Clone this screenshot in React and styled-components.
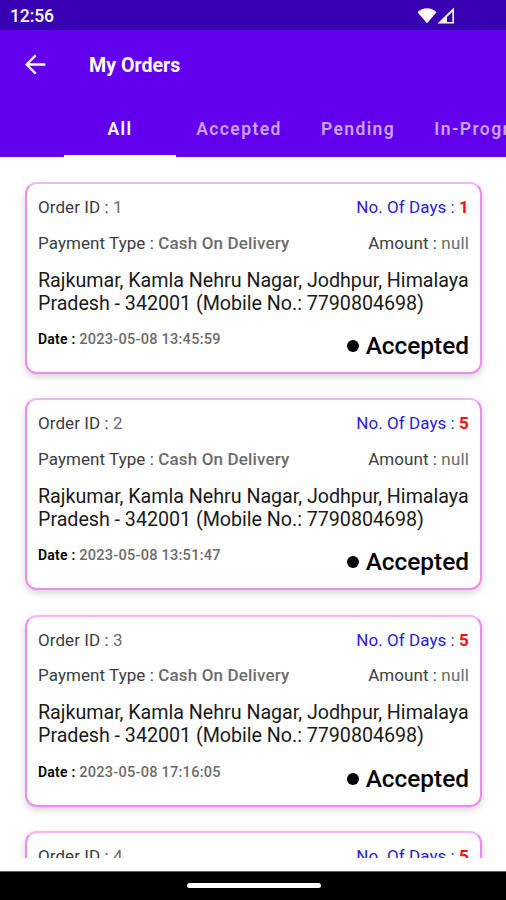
import React from "react";
import styled, { createGlobalStyle, css } from "styled-components";

const GlobalStyle = createGlobalStyle`
  * {
    box-sizing: border-box;
  }
  body {
    margin: 0;
    background: #ffffff;
    font-family: Roboto, "Liberation Sans", sans-serif;
  }
`;

const Screen = styled.div`
  width: 506px;
  height: 900px;
  display: flex;
  flex-direction: column;
  overflow: hidden;
  background: #ffffff;
`;

const StatusBar = styled.div`
  height: 30px;
  flex-shrink: 0;
  display: flex;
  align-items: center;
  justify-content: space-between;
  padding: 2px 50px 0 10px;
  background: #3700b3;
  color: #ffffff;
`;
const Clock = styled.span`
  font-size: 17.5px;
  font-weight: 500;
  line-height: 20px;
  letter-spacing: -0.1px;
`;

const Toolbar = styled.header`
  height: 69px;
  flex-shrink: 0;
  display: flex;
  align-items: center;
  gap: 43px;
  padding: 1px 0 0 24px;
  background: #6200ee;
`;
const BackButton = styled.button`
  width: 22px;
  height: 22px;
  padding: 0;
  border: 0;
  background: none;
  display: flex;
`;
const Title = styled.h1`
  margin: 0;
  padding-top: 2px;
  color: #ffffff;
  font-size: 19.6px;
  font-weight: 700;
  line-height: 24px;
`;

const TabBar = styled.nav`
  height: 58px;
  flex-shrink: 0;
  display: flex;
  padding-left: 64px;
  overflow: hidden;
  background: #6200ee;
  border-top: 1px solid #5b00e2;
`;
const Tab = styled.div`
  width: ${(props) => props.$width}px;
  flex-shrink: 0;
  display: flex;
  align-items: center;
  justify-content: center;
  padding-top: 3px;
  border-bottom: 2px solid transparent;
  color: #c9a3f9;
  font-size: 17.5px;
  font-weight: 600;
  letter-spacing: 1.4px;
  white-space: nowrap;
  ${(props) =>
    props.$active &&
    css`
      color: #ffffff;
      border-bottom-color: #ffffff;
    `}
`;

const OrderList = styled.main`
  height: 701px;
  flex-shrink: 0;
  display: flex;
  flex-direction: column;
  gap: 24.3px;
  padding: 25px 24px 0 25px;
  overflow: hidden;
`;
const Card = styled.article`
  height: 192px;
  flex-shrink: 0;
  padding: 13px 11px 0 11px;
  background: #ffffff;
  border: 2px solid #ee8af1;
  border-top-color: #f6b3f7;
  border-radius: 12px;
  box-shadow: 0 3px 7px rgba(0, 0, 0, 0.17);
`;
const Row = styled.div`
  display: flex;
  align-items: ${(props) => props.$align || "baseline"};
  justify-content: space-between;
  margin-top: ${(props) => props.$top || 0}px;
`;
const Field = styled.span`
  color: ${(props) => props.$color || "#3c3c3c"};
  font-size: 17px;
  line-height: 20px;
  letter-spacing: 0.06px;
  white-space: nowrap;
`;
const Value = styled.span`
  color: ${(props) => props.$color || "#6c6c6c"};
  font-weight: ${(props) => props.$weight || 400};
  letter-spacing: 0.16px;
`;
const Address = styled.p`
  margin: 16px 0 0;
  color: #1a1a1a;
  font-size: 19.7px;
  line-height: 23.3px;
  letter-spacing: -0.03px;
  white-space: pre;
`;
const DateText = styled.span`
  color: #6c6c6c;
  font-size: 14.6px;
  font-weight: 500;
  line-height: 18px;
  letter-spacing: 0.22px;
`;
const DateLabel = styled.span`
  color: #000000;
  font-size: 14px;
  font-weight: 600;
`;
const Status = styled.span`
  display: flex;
  align-items: center;
  gap: 7px;
  padding-top: 2px;
  color: #000000;
  font-size: 24.4px;
  font-weight: 500;
  line-height: 28px;
`;
const StatusDot = styled.i`
  width: 12px;
  height: 12px;
  border-radius: 50%;
  background: #000000;
`;

const NavigationBar = styled.footer`
  height: 29px;
  flex-shrink: 0;
  margin-top: 13px;
  display: flex;
  justify-content: center;
  padding: 11px 0 0 1px;
  background: #000000;
  border-top: 1px solid #5a5a5a;
`;
const HomeHandle = styled.div`
  width: 134px;
  height: 5px;
  border-radius: 3px;
  background: #ffffff;
`;

const tabs = [
  { label: "All", width: 112 },
  { label: "Accepted", width: 126 },
  { label: "Pending", width: 112 },
  { label: "In-Progress", width: 148 },
];

const address =
  "Rajkumar, Kamla Nehru Nagar, Jodhpur, Himalaya\nPradesh - 342001 (Mobile No.: 7790804698)";

const orders = [
  { id: 1, days: 1, date: "2023-05-08 13:45:59" },
  { id: 2, days: 5, date: "2023-05-08 13:51:47" },
  { id: 3, days: 5, date: "2023-05-08 17:16:05" },
  { id: 4, days: 5, date: "2023-05-08 17:20:31" },
];

function SignalIcons() {
  return (
    <svg width="39" height="18" viewBox="0 0 39 18" fill="#ffffff">
      <path d="M0.5 5.2C5.5-0.2 14.5-0.2 19.5 5.2L10 16.3Z" />
      <path
        fillRule="evenodd"
        d="M20.5 16.5L37 0.5V16.5ZM30 15H35.4V4.8L30 10Z"
      />
    </svg>
  );
}

function BackIcon() {
  return (
    <svg width="22" height="22" viewBox="0 0 22 22" fill="none">
      <path
        d="M21.3 10.5H3M11.7 1.4L2.6 10.5L11.7 19.6"
        stroke="#ffffff"
        strokeWidth="2.3"
      />
    </svg>
  );
}

function OrderCard({ order }) {
  return (
    <Card>
      <Row>
        <Field>
          Order ID : <Value>{order.id}</Value>
        </Field>
        <Field $color="#2a20d8">
          No. Of Days :{" "}
          <Value $color="#fb0d0d" $weight={700}>
            {order.days}
          </Value>
        </Field>
      </Row>
      <Row $top={15.5}>
        <Field>
          Payment Type : <Value $weight={500}>Cash On Delivery</Value>
        </Field>
        <Field>
          Amount : <Value>null</Value>
        </Field>
      </Row>
      <Address>{address}</Address>
      <Row $top={15} $align="flex-start">
        <DateText>
          <DateLabel>Date : </DateLabel>
          {order.date}
        </DateText>
        <Status>
          <StatusDot />
          Accepted
        </Status>
      </Row>
    </Card>
  );
}

function App() {
  return (
    <Screen>
      <GlobalStyle />
      <StatusBar>
        <Clock>12:56</Clock>
        <SignalIcons />
      </StatusBar>
      <Toolbar>
        <BackButton aria-label="Back">
          <BackIcon />
        </BackButton>
        <Title>My Orders</Title>
      </Toolbar>
      <TabBar>
        {tabs.map((tab, index) => (
          <Tab key={tab.label} $width={tab.width} $active={index === 0}>
            {tab.label}
          </Tab>
        ))}
      </TabBar>
      <OrderList>
        {orders.map((order) => (
          <OrderCard key={order.id} order={order} />
        ))}
      </OrderList>
      <NavigationBar>
        <HomeHandle />
      </NavigationBar>
    </Screen>
  );
}

export default App;
